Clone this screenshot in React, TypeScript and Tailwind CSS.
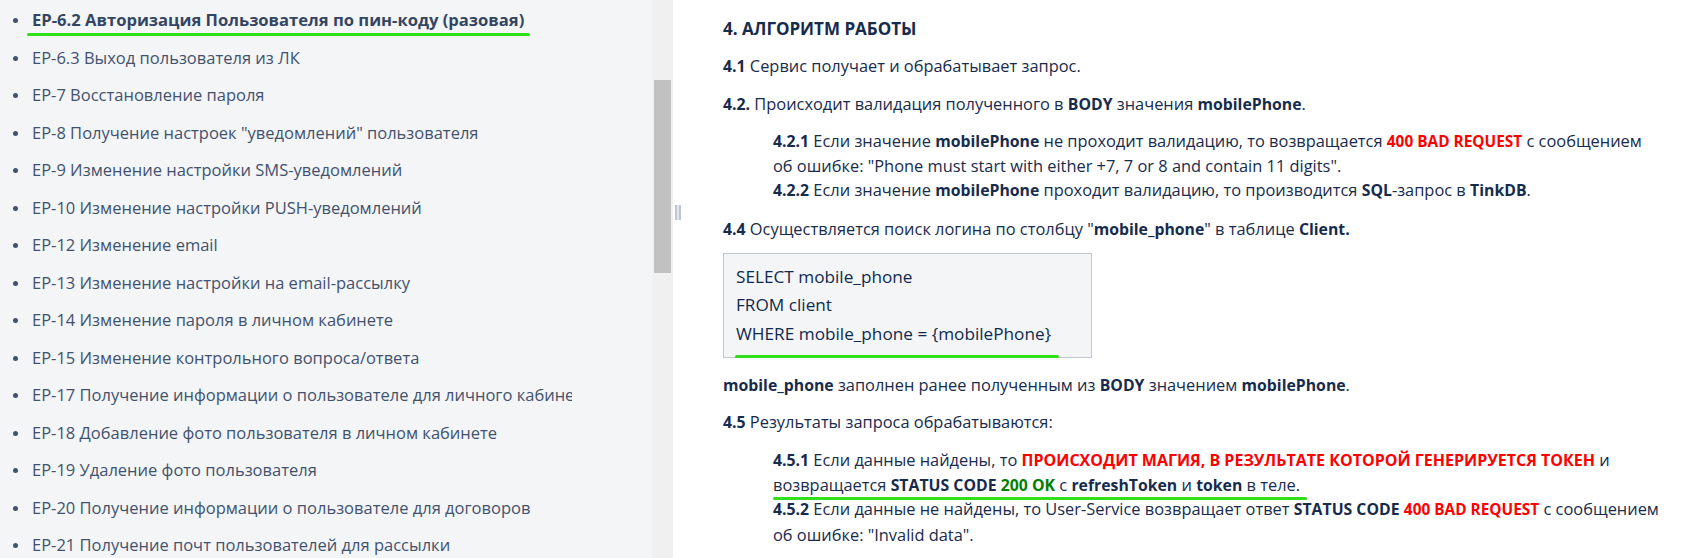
import React from "react";

const navItems = [
  "EP-6.3 Выход пользователя из ЛК",
  "EP-7 Восстановление пароля",
  'EP-8 Получение настроек "уведомлений" пользователя',
  "EP-9 Изменение настройки SMS-уведомлений",
  "EP-10 Изменение настройки PUSH-уведомлений",
  "EP-12 Изменение email",
  "EP-13 Изменение настройки на email-рассылку",
  "EP-14 Изменение пароля в личном кабинете",
  "EP-15 Изменение контрольного вопроса/ответа",
  "EP-17 Получение информации о пользователе для личного кабинета",
  "EP-18 Добавление фото пользователя в личном кабинете",
  "EP-19 Удаление фото пользователя",
  "EP-20 Получение информации о пользователе для договоров",
  "EP-21 Получение почт пользователей для рассылки",
];

const B = ({ children }: { children: React.ReactNode }) => (
  <strong className="text-[15.8px] font-bold text-[#172b4d]">{children}</strong>
);
const R = ({ children }: { children: React.ReactNode }) => (
  <strong className="text-[16px] font-bold text-[#ff0000]">{children}</strong>
);
const RL = ({ children }: { children: React.ReactNode }) => (
  <strong className="text-[15.4px] font-bold text-[#ff0000]">{children}</strong>
);
const G = ({ children }: { children: React.ReactNode }) => (
  <strong className="text-[15.8px] font-bold text-[#008000]">{children}</strong>
);

export default function App() {
  return (
    <div className="flex h-[558px] w-[1707px] overflow-hidden bg-white font-['Open_Sans',sans-serif]">
      {/* Sidebar */}
      <aside className="h-full w-[652px] shrink-0 bg-[#f4f5f7]">
        <ul className="w-[572px] overflow-hidden pt-[2px] text-[16.5px] text-[#42526e]">
          <li className="relative flex h-[37.5px] items-center whitespace-nowrap">
            <span className="ml-[13px] mr-[14px] h-[5px] w-[5px] shrink-0 rounded-full bg-[#42526e]" />
            <span className="text-[16.6px] font-bold text-[#344563]">
              EP-6.2 Авторизация Пользователя по пин-коду (разовая)
            </span>
            <span className="absolute left-[27px] top-[31px] h-[3px] w-[503px] rounded-full bg-[#2fe01a]" />
          </li>
          {navItems.map((t) => (
            <li key={t} className="flex h-[37.5px] items-center whitespace-nowrap">
              <span className="ml-[13px] mr-[14px] h-[5px] w-[5px] shrink-0 rounded-full bg-[#42526e]" />
              <span>{t}</span>
            </li>
          ))}
        </ul>
      </aside>

      {/* Scrollbar */}
      <div className="h-full w-[21px] shrink-0 bg-[#f0f0f0] px-[2px] pt-[80px]">
        <div className="h-[193px] w-[17px] bg-[#c1c1c1]" />
      </div>

      {/* Resize handle column */}
      <div className="h-full w-[50px] shrink-0 pl-[2px] pt-[205px]">
        <div className="flex h-[15px] w-[6px]">
          <div className="h-full w-[2px] bg-[#c1c7d0]" />
          <div className="h-full w-[2px] bg-[#e4e7ec]" />
          <div className="h-full w-[2px] bg-[#c1c7d0]" />
        </div>
      </div>

      {/* Content */}
      <main className="w-[960px] shrink-0 pt-[17px] text-[16.4px] leading-[24px] text-[#172b4d]">
        <h2 className="text-[17px] font-bold">4. АЛГОРИТМ РАБОТЫ</h2>
        <p className="mt-[12.5px]">
          <B>4.1</B> Сервис получает и обрабатывает запрос.
        </p>
        <p className="mt-[14.5px]">
          <B>4.2.</B> Происходит валидация полученного в <B>BODY</B> значения <B>mobilePhone</B>.
        </p>
        <div className="mt-[12.7px] pl-[50px] whitespace-nowrap">
          <p>
            <B>4.2.1</B> Если значение <B>mobilePhone</B> не проходит валидацию, то возвращается{" "}
            <RL>400 BAD REQUEST</RL> с сообщением
            <br />
            об ошибке: "Phone must start with either +7, 7 or 8 and contain 11 digits".
          </p>
          <p>
            <B>4.2.2</B> Если значение <B>mobilePhone</B> проходит валидацию, то производится <B>SQL</B>-запрос в{" "}
            <B>TinkDB</B>.
          </p>
        </div>
        <p className="mt-[15.8px]">
          <B>4.4</B> Осуществляется поиск логина по столбцу "<B>mobile_phone</B>" в таблице <B>Client.</B>
        </p>
        <div className="relative mt-[11.2px] h-[105px] w-[369px] border border-[#c1c7d0] bg-[#f4f5f7] pl-[12px] pt-[9px] text-[17.2px] font-medium leading-[28.8px] text-[#0f2a4f]">
          <div>SELECT mobile_phone</div>
          <div>FROM client</div>
          <div>WHERE mobile_phone = {"{mobilePhone}"}</div>
          <span className="absolute bottom-[-1px] left-[11px] h-[3px] w-[324px] rounded-full bg-[#2fe01a]" />
        </div>
        <p className="mt-[15px]">
          <B>mobile_phone</B> заполнен ранее полученным из <B>BODY</B> значением <B>mobilePhone</B>.
        </p>
        <p className="mt-[13.6px]">
          <B>4.5</B> Результаты запроса обрабатываются:
        </p>
        <div className="mt-[14px] pl-[50px] leading-[24.5px] whitespace-nowrap">
          <p className="relative">
            <B>4.5.1</B> Если данные найдены, то <R>ПРОИСХОДИТ МАГИЯ, В РЕЗУЛЬТАТЕ КОТОРОЙ ГЕНЕРИРУЕТСЯ ТОКЕН</R> и
            <br />
            возвращается <B>STATUS CODE</B> <G>200 OK</G> с <B>refreshToken</B> и <B>token</B> в теле.
            <span className="absolute left-0 top-[49px] h-[3px] w-[534px] rounded-full bg-[#2fe01a]" />
          </p>
          <p>
            <B>4.5.2</B> Если данные не найдены, то User-Service возвращает ответ <B>STATUS CODE</B>{" "}
            <RL>400 BAD REQUEST</RL> с сообщением
            <br />
            об ошибке: "Invalid data".
          </p>
        </div>
      </main>
    </div>
  );
}
